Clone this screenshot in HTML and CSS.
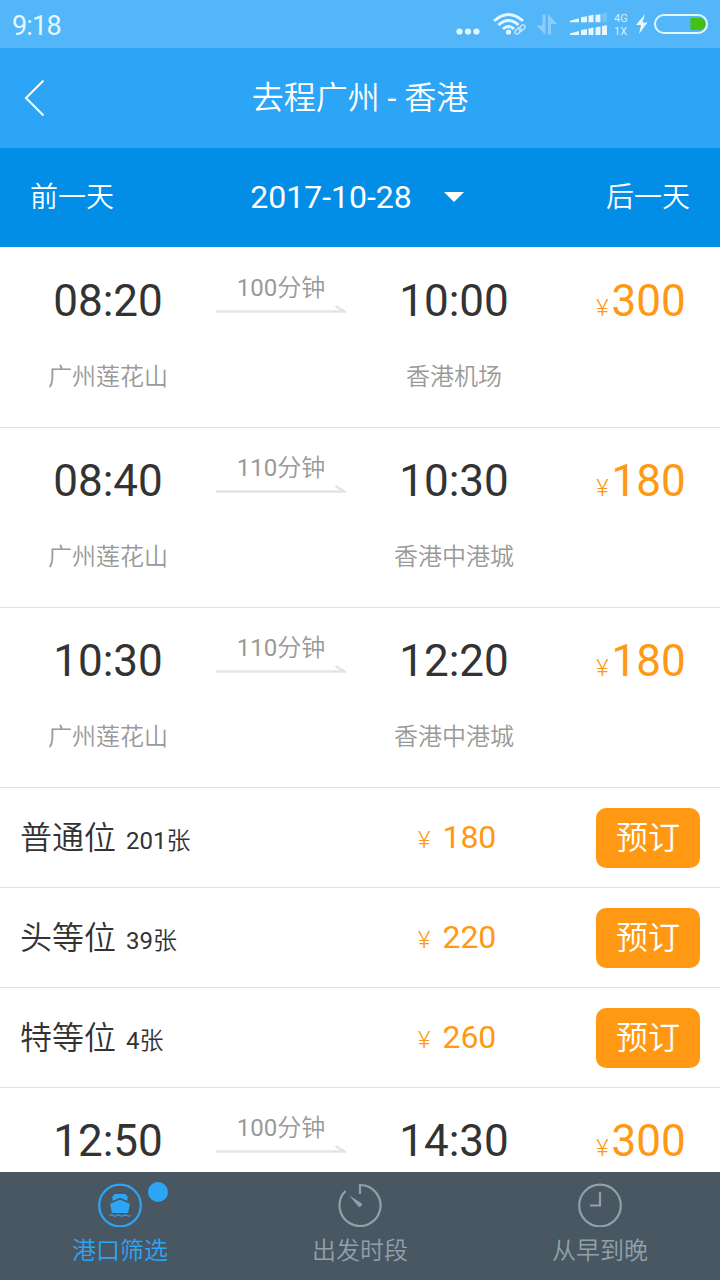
FILE: index.html
```html
<!DOCTYPE html>
<html lang="zh-CN">
<head>
  <meta charset="UTF-8">
  <meta name="viewport" content="width=device-width, initial-scale=1">
  <title>去程广州 - 香港</title>
  <link rel="stylesheet" href="styles.css">
</head>
<body>
  <div class="page">
    <div class="status">
      <span class="clock">9:18</span>
      <svg class="status-icons" width="260" height="48" viewBox="0 0 260 48">
        <g fill="#e6f6ff">
          <circle cx="9.500" cy="31.500" r="3.100"/>
          <circle cx="18" cy="31.500" r="3.100"/>
          <circle cx="26.500" cy="31.500" r="3.100"/>
          <circle cx="58.500" cy="32" r="2.600"/>
          <path d="M120 22.300v-1.500l9-2.500v4zM131 22.300v-5l6-1v6zM138.500 22.300v-6.500l5-1v7.500zM145.500 22.300V15l5-.8v8.100z"/>
          <path d="M120 35v-1.500l9-2.500v4zM131 35v-5l6-1v6zM138.500 35v-6.500l5-1V35zM145.500 35v-7.500l5-1V35zM152 35v-9l5-.8V35z"/>
          <path d="M195 14l-9 11h5l-2 9 8.500-11.500h-5z"/>
        </g>
        <path fill="#72c3fa" d="M152 13.500l5-.8v9.600h-5z"/>
        <g fill="none" stroke="#e6f6ff" stroke-width="3">
          <path d="M44 21q14.500-13 29 0M48.500 25q10-9 20 0M53 29q5.500-5 11 0"/>
        </g>
        <g fill="none" stroke="#bfe4ff" stroke-width="1.500">
          <rect x="64.500" y="29" width="7" height="4" rx="2" transform="rotate(-45 68 31)"/>
          <rect x="68.500" y="26" width="7" height="4" rx="2" transform="rotate(-45 72 28)"/>
        </g>
        <path fill="#8bcdfb" d="M92.500 14.500h3V35l-9-9.500h6zM98 34.500h3V24h6.500L98 14z"/>
        <text class="network" x="164" y="22">4G</text>
        <text class="network" x="164" y="35">1X</text>
        <rect x="205" y="15" width="52" height="18" rx="9" fill="none" stroke="#e6f6ff" stroke-width="2"/>
        <path fill="#45c010" d="M240.500 18h9a6 6 0 0 1 0 12h-9z"/>
      </svg>
    </div>

    <div class="header">
      <svg class="back" width="24" height="40" viewBox="0 0 24 40">
        <path d="M21.500 2.500L4 20l17.500 17.500"/>
      </svg>
      <h1>去程广州 <em>-</em> 香港</h1>
    </div>

    <div class="date-bar">
      <span>前一天</span>
      <div class="date">2017-10-28<i class="caret"></i></div>
      <span>后一天</span>
    </div>

    <ul class="list">
      <li class="ship">
        <div class="stop"><b>08:20</b><p>广州莲花山</p></div>
        <div class="duration"><em>100</em>分钟<svg width="130" height="10"><path d="M0 6.500h128.500l-9-5.500"/></svg></div>
        <div class="stop"><b>10:00</b><p>香港机场</p></div>
        <div class="price"><i>¥</i>300</div>
      </li>
      <li class="ship">
        <div class="stop"><b>08:40</b><p>广州莲花山</p></div>
        <div class="duration"><em>110</em>分钟<svg width="130" height="10"><path d="M0 6.500h128.500l-9-5.500"/></svg></div>
        <div class="stop"><b>10:30</b><p>香港中港城</p></div>
        <div class="price"><i>¥</i>180</div>
      </li>
      <li class="ship">
        <div class="stop"><b>10:30</b><p>广州莲花山</p></div>
        <div class="duration"><em>110</em>分钟<svg width="130" height="10"><path d="M0 6.500h128.500l-9-5.500"/></svg></div>
        <div class="stop"><b>12:20</b><p>香港中港城</p></div>
        <div class="price"><i>¥</i>180</div>
      </li>
      <li class="seat">
        <div class="name">普通位<small><em>201</em>张</small></div>
        <div class="seat-price"><i>¥</i>180</div>
        <button class="book">预订</button>
      </li>
      <li class="seat">
        <div class="name">头等位<small><em>39</em>张</small></div>
        <div class="seat-price"><i>¥</i>220</div>
        <button class="book">预订</button>
      </li>
      <li class="seat">
        <div class="name">特等位<small><em>4</em>张</small></div>
        <div class="seat-price"><i>¥</i>260</div>
        <button class="book">预订</button>
      </li>
      <li class="ship">
        <div class="stop"><b>12:50</b></div>
        <div class="duration"><em>100</em>分钟<svg width="130" height="10"><path d="M0 6.500h128.500l-9-5.500"/></svg></div>
        <div class="stop"><b>14:30</b></div>
        <div class="price"><i>¥</i>300</div>
      </li>
    </ul>

    <div class="tabs">
      <div class="tab active">
        <div class="icon">
          <svg width="44" height="44" viewBox="0 0 44 44">
            <circle cx="22" cy="22.500" r="20.800"/>
            <path class="solid" d="M14.500 18V13.500l2-2.500h11l2 2.500V18L22 14.800z"/>
            <path class="solid" d="M22 16.500l10 4.500-2 9H14l-2-9z"/>
            <path class="wave" d="M11.500 32.500q1.800-1.300 3.500 0t3.500 0 3.500 0 3.500 0 3.500 0 3.500 0"/>
          </svg>
          <i class="dot"></i>
        </div>
        <span>港口筛选</span>
      </div>
      <div class="tab">
        <div class="icon">
          <svg width="44" height="44" viewBox="0 0 44 44">
            <path d="M22 11V2A20.500 20.500 0 1 1 7.500 8"/>
            <path class="solid" d="M11 12.300l12.500 7.900a2.300 2.300 0 0 1-3 3.300z"/>
          </svg>
        </div>
        <span>出发时段</span>
      </div>
      <div class="tab">
        <div class="icon">
          <svg width="44" height="44" viewBox="0 0 44 44">
            <circle cx="22" cy="22.500" r="20.800"/>
            <path d="M22 9v13.500H12"/>
          </svg>
        </div>
        <span>从早到晚</span>
      </div>
    </div>
  </div>
</body>
</html>
```

FILE: styles.css
```css
* {
  margin: 0;
  padding: 0;
  box-sizing: border-box;
}
html, body {
  width: 100%;
  height: 100%;
}
body {
  font-family: Roboto, "Noto Sans CJK SC", sans-serif;
  color: #333;
  background: #fff;
  overflow: hidden;
}
i, em {
  font-style: normal;
}
em {
  font-weight: 400;
}
.page {
  display: flex;
  flex-direction: column;
  height: 100%;
}
.status {
  display: flex;
  justify-content: space-between;
  height: 48px;
  padding: 0 10px 0 12px;
  background: #53b6f9;
}
.clock {
  font-size: 27px;
  line-height: 52px;
  letter-spacing: -0.8px;
  color: #e6f6ff;
}
.status-icons {
  display: block;
}
.network {
  font-size: 11px;
  fill: #d5efff;
}
.header {
  display: grid;
  grid-template-columns: 60px 1fr 60px;
  align-items: center;
  height: 100px;
  background: #2da5f6;
}
.back {
  margin-left: 22px;
  fill: none;
  stroke: #fff;
  stroke-width: 2;
}
.header h1 {
  font-size: 32px;
  font-weight: 350;
  line-height: 100px;
  height: 100px;
  text-align: center;
  color: #fff;
}
.date-bar {
  display: grid;
  grid-template-columns: 1fr auto 1fr;
  height: 99px;
  padding: 0 30px;
  font-size: 28px;
  font-weight: 350;
  line-height: 100px;
  color: #fff;
  background: #028de7;
}
.date-bar > span:last-child {
  text-align: right;
}
.date {
  display: flex;
  align-items: center;
  gap: 32px;
  height: 98px;
  padding-right: 6px;
  font-size: 32px;
  font-weight: 400;
  line-height: 98px;
}
.caret {
  border: 10px solid transparent;
  border-top-color: #fff;
  border-bottom: 0;
}
.list {
  flex: 1;
  min-height: 0;
  padding-top: 1px;
  overflow: hidden;
  list-style: none;
}
.list li {
  border-bottom: 1px solid #e0e0e0;
}
.ship {
  display: grid;
  grid-template-columns: 216px 130px 216px 1fr;
  height: 180px;
  padding-top: 23px;
  text-align: center;
}
.stop b {
  display: block;
  font-size: 44px;
  font-weight: 400;
  line-height: 60px;
}
.stop p {
  margin-top: 26px;
  font-size: 24px;
  font-weight: 350;
  line-height: 40px;
  color: #999;
}
.duration {
  font-size: 24px;
  font-weight: 350;
  line-height: 34px;
  color: #999;
}
.duration svg {
  display: block;
  fill: none;
  stroke: #e3e4ea;
  stroke-width: 2.5;
}
.price {
  font-size: 44px;
  line-height: 60px;
  color: #ff9913;
}
.price i, .seat-price i {
  font-size: 24px;
  font-weight: 300;
}
.price i {
  margin-right: 3px;
}
.seat {
  display: grid;
  grid-template-columns: 397px 1fr 104px;
  align-items: center;
  height: 100px;
  padding: 0 20px;
}
.name {
  padding-bottom: 6px;
  font-size: 32px;
  font-weight: 350;
}
.name small {
  margin-left: 10px;
  font-size: 24px;
}
.seat-price {
  padding: 0 0 2px 1px;
  font-size: 32px;
  color: #ff9913;
}
.seat-price i {
  margin-right: 12px;
}
.book {
  height: 60px;
  border: 0;
  border-radius: 10px;
  font-family: inherit;
  font-size: 32px;
  font-weight: 350;
  line-height: 56px;
  color: #fff;
  background: #ff9913;
}
.tabs {
  display: flex;
  height: 108px;
  background: #485762;
}
.tab {
  flex: 1;
  padding-top: 11px;
  font-size: 24px;
  font-weight: 350;
  line-height: 48px;
  text-align: center;
  color: #93a0aa;
}
.tab.active {
  color: #2da5f6;
}
.icon {
  position: relative;
  width: 44px;
  height: 44px;
  margin: 0 auto;
}
.icon svg {
  display: block;
  fill: none;
  stroke: currentColor;
  stroke-width: 2.2;
}
.icon .solid {
  fill: currentColor;
  stroke: none;
}
.icon .wave {
  stroke-width: 1.2;
}
.dot {
  position: absolute;
  top: -1px;
  left: 50px;
  width: 20px;
  height: 20px;
  border-radius: 50%;
  background: #2da5f6;
}
```
